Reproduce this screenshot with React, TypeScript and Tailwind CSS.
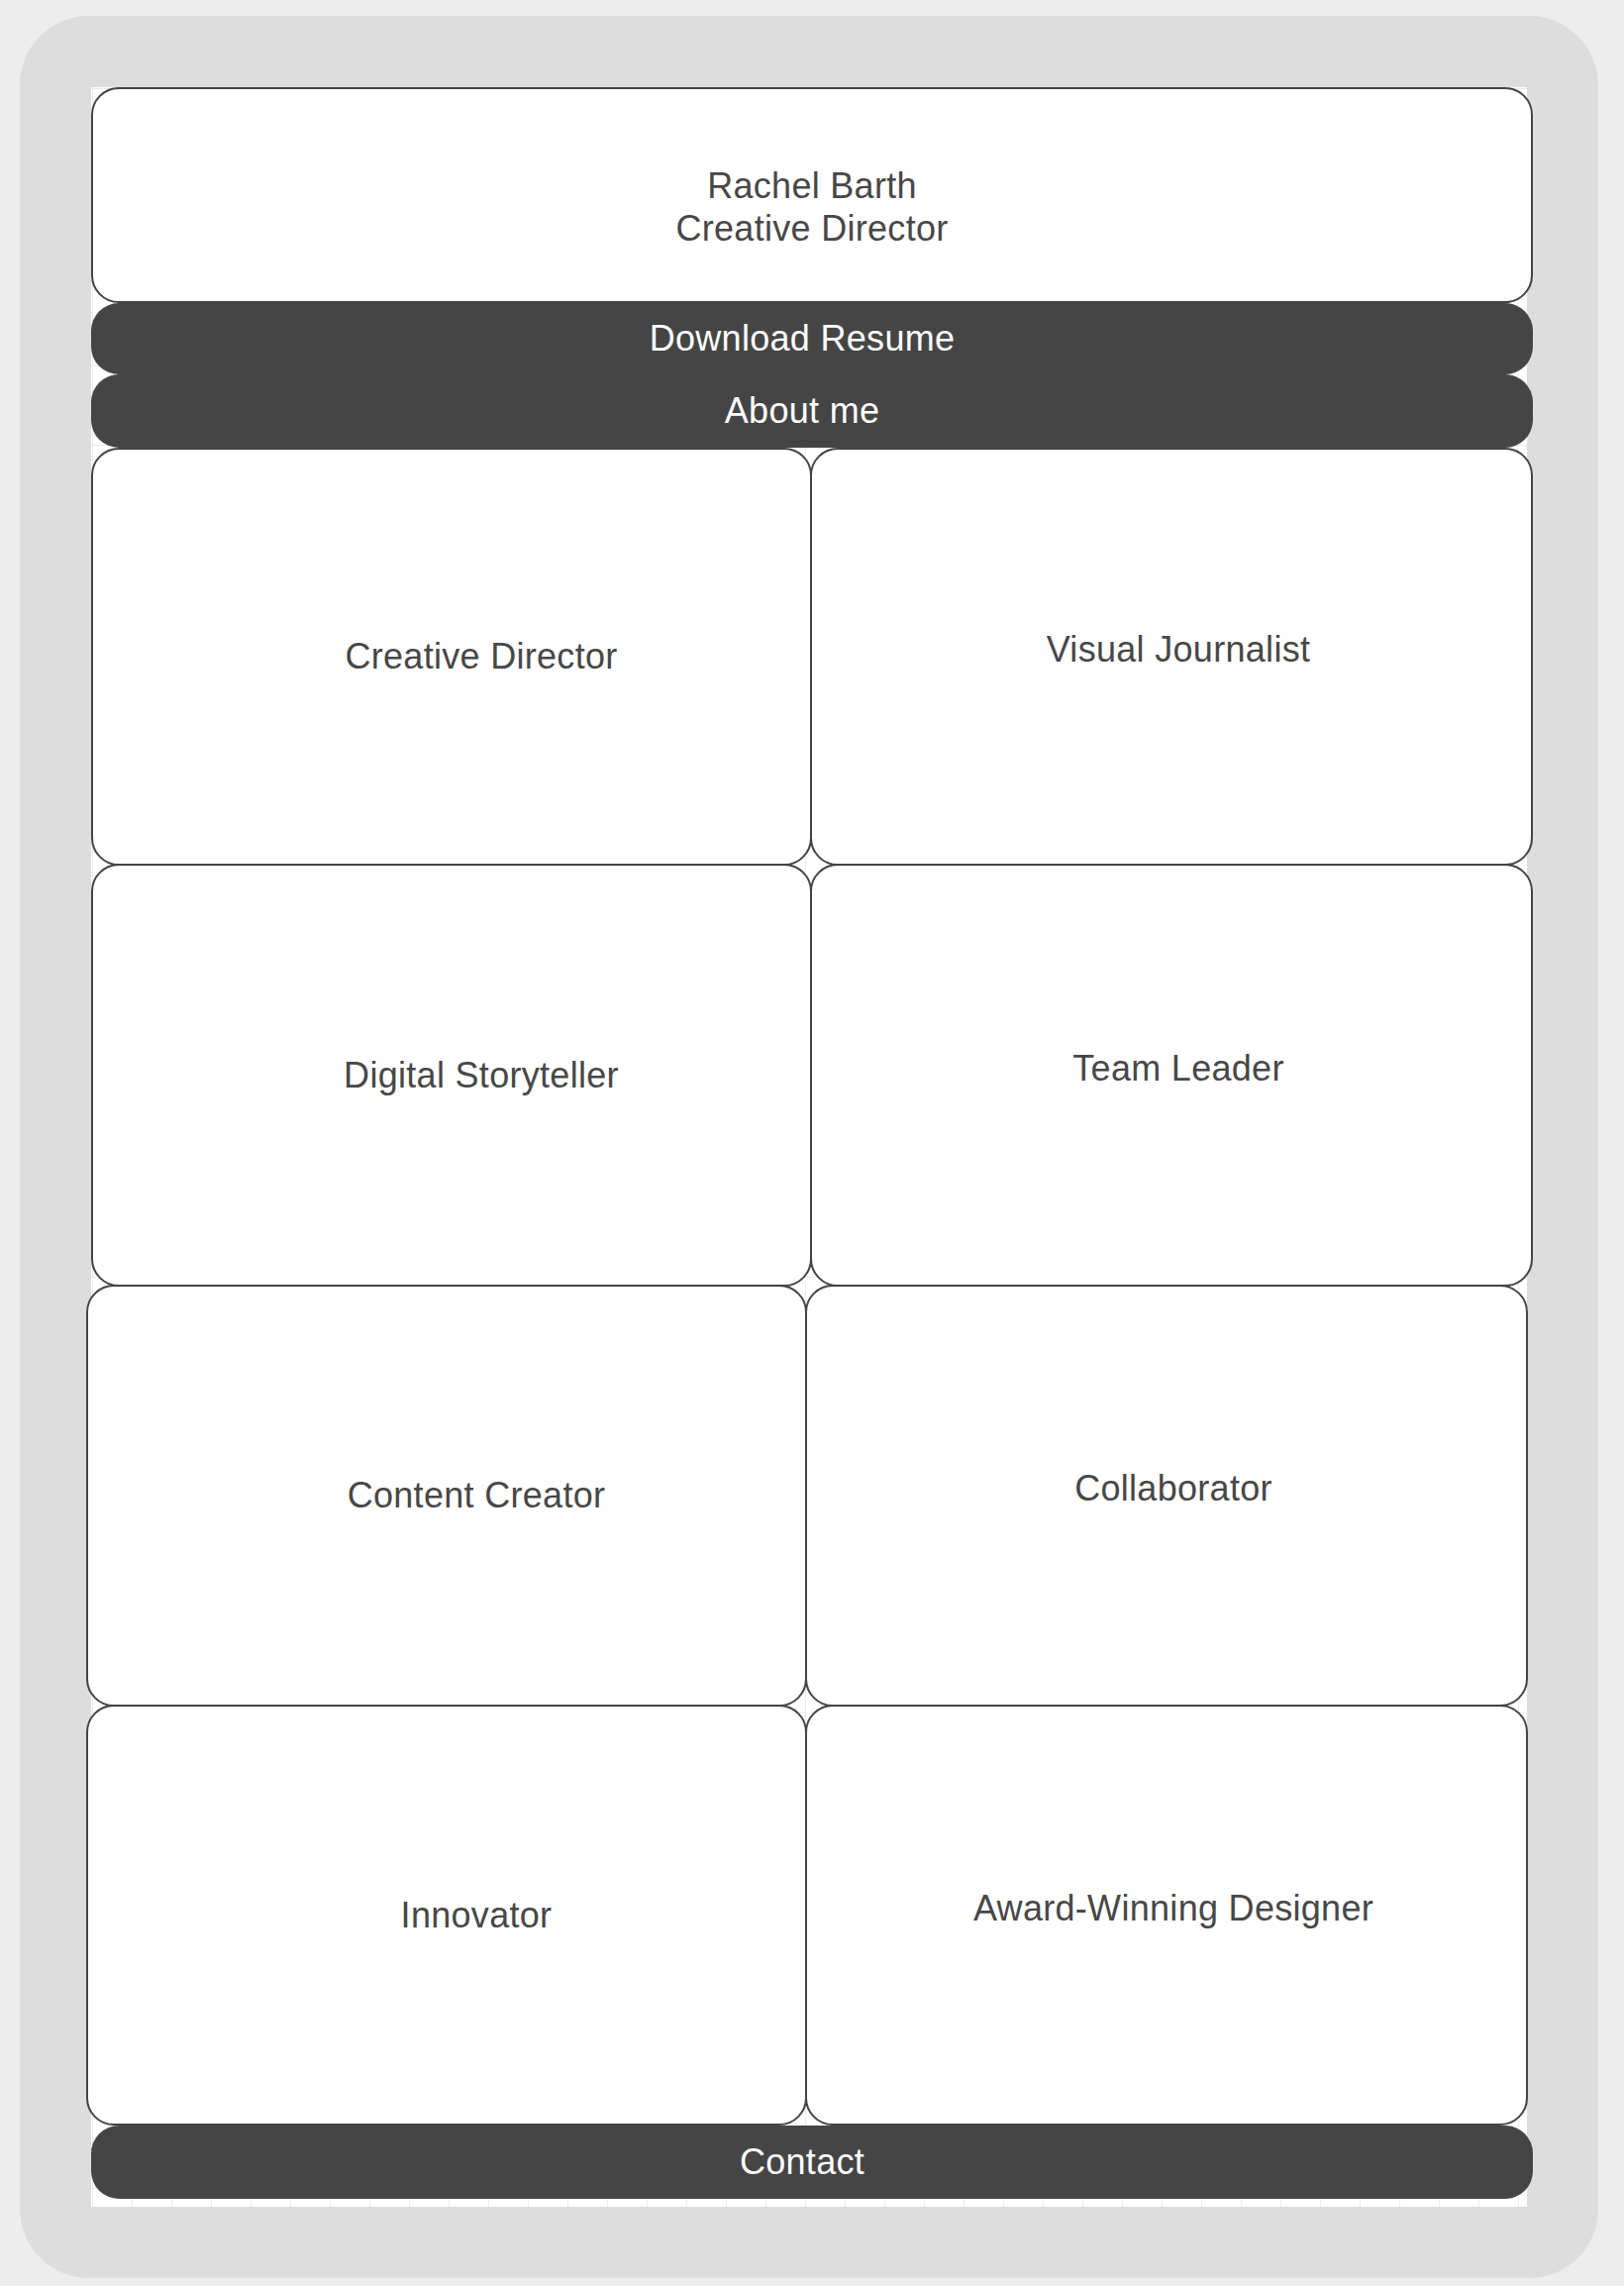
const roles = [
  ["Creative Director", "Visual Journalist"],
  ["Digital Storyteller", "Team Leader"],
  ["Content Creator", "Collaborator"],
  ["Innovator", "Award-Winning Designer"],
];

// rows after the first overlap the one above by the border width
const rowClasses = [
  "h-[422px]",
  "-mt-[2px] h-[427px]",
  "-mt-[2px] -ml-[5px] h-[426px]",
  "-mt-[2px] -ml-[5px] h-[425px]",
];

const Bar = ({ label, h }: { label: string; h: string }) => (
  <div
    className={`${h} flex w-full items-center justify-center rounded-[28px] bg-[#454545] pr-[20px] text-[36px] leading-none tracking-[0.3px] text-white`}
  >
    {label}
  </div>
);

const App = () => {
  return (
    <div
      className="h-[2308px] w-[1640px] overflow-hidden bg-[#ededed] pt-[16px] pl-[20px]"
      style={{ fontFamily: '"Liberation Sans", Arial, sans-serif' }}
    >
      <div className="h-[2284px] w-[1594px] rounded-[70px] bg-[#dddddd] p-[72px]">
        <div className="h-[2140px] w-[1450px] bg-white bg-[linear-gradient(to_right,#ececec_1px,transparent_1px),linear-gradient(to_bottom,#ececec_1px,transparent_1px)] bg-size-[40px_40px] bg-position-[1px_1px]">
          <div className="flex w-[1456px] flex-col">
            <div className="flex h-[218px] flex-col items-center justify-center rounded-[28px] border-2 border-[#444] bg-white pt-[24px] text-[36px] leading-[1.2] tracking-[0.3px] text-[#474747]">
              <span>Rachel Barth</span>
              <span>Creative Director</span>
            </div>
            <Bar label="Download Resume" h="h-[72px]" />
            <Bar label="About me" h="h-[74px]" />
            {roles.map(([left, right], i) => (
              <div
                key={left}
                className={`${rowClasses[i]} grid w-[1456px] shrink-0 grid-cols-2`}
              >
                <div className="flex items-center justify-center rounded-[28px] border-2 border-[#444] bg-white pl-[60px] text-[36px] leading-none tracking-[0.3px] text-[#474747]">
                  {left}
                </div>
                <div className="-ml-[2px] flex items-center justify-center rounded-[28px] border-2 border-[#444] bg-white pb-[14px] pl-[14px] text-[36px] leading-none tracking-[0.3px] text-[#474747]">
                  {right}
                </div>
              </div>
            ))}
            <Bar label="Contact" h="h-[74px]" />
          </div>
        </div>
      </div>
    </div>
  );
};

export default App;
